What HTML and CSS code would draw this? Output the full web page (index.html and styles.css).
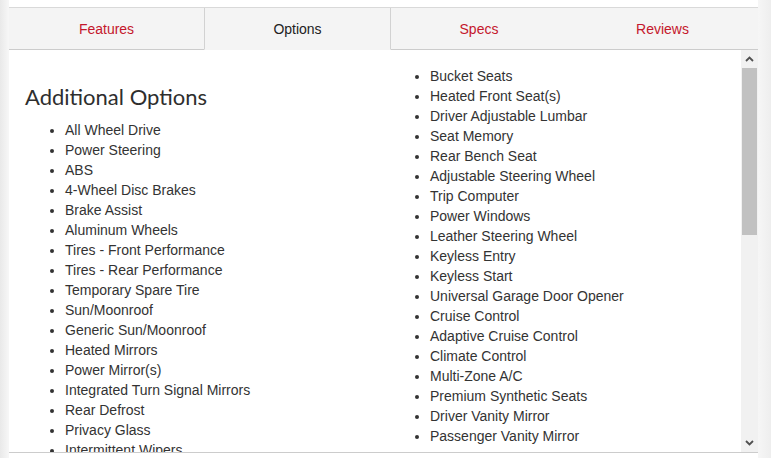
FILE: index.html
```html
<!DOCTYPE html>
<html lang="en">
<head>
<meta charset="utf-8">
<title>Options</title>
<link rel="stylesheet" href="styles.css">
</head>
<body>
<div class="page">
  <div class="edge edge-left"></div>
  <div class="card">
    <div class="topgap"></div>
    <nav class="tabs">
      <a class="tab">Features</a>
      <a class="tab active">Options</a>
      <a class="tab">Specs</a>
      <a class="tab">Reviews</a>
    </nav>
    <div class="panel">
      <div class="content">
        <div class="col">
          <h2 class="title">Additional Options</h2>
          <ul class="list">
            <li>All Wheel Drive</li>
            <li>Power Steering</li>
            <li>ABS</li>
            <li>4-Wheel Disc Brakes</li>
            <li>Brake Assist</li>
            <li>Aluminum Wheels</li>
            <li>Tires - Front Performance</li>
            <li>Tires - Rear Performance</li>
            <li>Temporary Spare Tire</li>
            <li>Sun/Moonroof</li>
            <li>Generic Sun/Moonroof</li>
            <li>Heated Mirrors</li>
            <li>Power Mirror(s)</li>
            <li>Integrated Turn Signal Mirrors</li>
            <li>Rear Defrost</li>
            <li>Privacy Glass</li>
            <li>Intermittent Wipers</li>
          </ul>
        </div>
        <div class="col">
          <ul class="list">
            <li>Bucket Seats</li>
            <li>Heated Front Seat(s)</li>
            <li>Driver Adjustable Lumbar</li>
            <li>Seat Memory</li>
            <li>Rear Bench Seat</li>
            <li>Adjustable Steering Wheel</li>
            <li>Trip Computer</li>
            <li>Power Windows</li>
            <li>Leather Steering Wheel</li>
            <li>Keyless Entry</li>
            <li>Keyless Start</li>
            <li>Universal Garage Door Opener</li>
            <li>Cruise Control</li>
            <li>Adaptive Cruise Control</li>
            <li>Climate Control</li>
            <li>Multi-Zone A/C</li>
            <li>Premium Synthetic Seats</li>
            <li>Driver Vanity Mirror</li>
            <li>Passenger Vanity Mirror</li>
          </ul>
        </div>
      </div>
      <div class="scrollbar">
        <div class="sb-btn">
          <svg width="9" height="6" viewBox="0 0 9 6"><path d="M1 5 L4.5 1.5 L8 5" fill="none" stroke="#505050" stroke-width="1.8"/></svg>
        </div>
        <div class="sb-thumb"></div>
        <div class="sb-track"></div>
        <div class="sb-btn">
          <svg width="9" height="6" viewBox="0 0 9 6"><path d="M1 1 L4.5 4.5 L8 1" fill="none" stroke="#505050" stroke-width="1.8"/></svg>
        </div>
      </div>
    </div>
    <div class="rest"></div>
  </div>
  <div class="edge edge-right"></div>
</div>
</body>
</html>
```
FILE: styles.css
```css
html, body {
  margin: 0;
  padding: 0;
  background: #ffffff;
}

.page {
  display: flex;
  height: 458px;
  width: 771px;
  overflow: hidden;
  font-family: "Liberation Sans", Arial, sans-serif;
  font-size: 14px;
  color: #333333;
}

.edge {
  flex: 0 0 auto;
  height: 100%;
}

.edge-left {
  width: 9px;
  background: linear-gradient(to right, #e9e9e9, #f7f7f7);
}

.edge-right {
  width: 13px;
  background: linear-gradient(to right, #f6f6f6, #eeeeee);
}

.card {
  width: 750px;
  display: flex;
  flex-direction: column;
  background: #ffffff;
}

.topgap {
  height: 7px;
  flex: 0 0 auto;
}

.tabs {
  display: grid;
  grid-template-columns: 195px 187px 176px 1fr;
  flex: 0 0 auto;
  border-top: 1px solid #d9d9d9;
  background: #f4f4f4;
}

.tab {
  height: 40px;
  padding-top: 1px;
  line-height: 41px;
  text-align: center;
  color: #c4172c;
  font-size: 14px;
  border-bottom: 1px solid #cccccc;
  cursor: pointer;
}

.tab.active {
  color: #222222;
  border-left: 1px solid #d2d2d2;
  border-right: 1px solid #d2d2d2;
  border-bottom-color: #f4f4f4;
}

.panel {
  display: flex;
  flex: 0 0 auto;
  height: 402px;
  border-bottom: 1px solid #cccccc;
}

.content {
  flex: 1 1 auto;
  overflow: hidden;
  padding: 16px 0 0 16px;
  display: grid;
  grid-template-columns: 365px 1fr;
  align-items: start;
}

.title {
  margin: 17px 0 9px;
  font-family: Lato, "Liberation Sans", sans-serif;
  font-weight: 400;
  font-size: 22px;
  line-height: 28px;
  color: #2e2e2e;
}

.list {
  margin: 0;
  padding-left: 40px;
}

.list li {
  line-height: 20px;
}

.scrollbar {
  flex: 0 0 17px;
  display: flex;
  flex-direction: column;
  background: #f1f1f1;
}

.sb-btn {
  height: 18px;
  display: flex;
  align-items: center;
  justify-content: center;
  flex: 0 0 auto;
}

.sb-thumb {
  height: 167px;
  margin: 0 1px;
  background: #c1c1c1;
  flex: 0 0 auto;
}

.sb-track {
  flex: 1 1 auto;
}

.rest {
  flex: 1 1 auto;
}
```
